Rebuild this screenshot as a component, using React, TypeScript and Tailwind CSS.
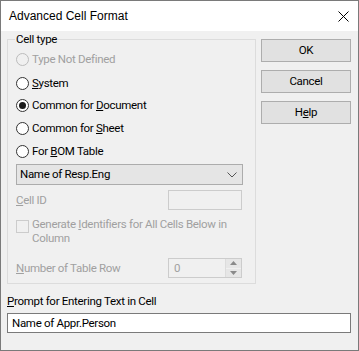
import React from 'react';

const font = { fontFamily: 'Roboto, "Liberation Sans", Arial, sans-serif' };
const titleFont = { fontFamily: '"Liberation Sans", Arial, sans-serif' };

function Radio({ label, checked, disabled }: { label: React.ReactNode; checked?: boolean; disabled?: boolean }) {
  return (
    <div className="flex items-center h-[22px]">
      <span
        className={`w-[13px] h-[13px] rounded-full border flex items-center justify-center ${
          disabled ? 'border-[#bcbcbc] bg-[#f0f0f0]' : 'border-[#333333] bg-white'
        }`}
      >
        {checked && <span className="w-[7px] h-[7px] rounded-full bg-[#1a1a1a]" />}
      </span>
      <span className={`ml-[3px] ${disabled ? 'text-[#a0a0a0]' : 'text-black'}`}>{label}</span>
    </div>
  );
}

function Btn({ children }: { children: React.ReactNode }) {
  return (
    <div className="w-[90px] h-[23px] border border-[#adadad] bg-[#e1e1e1] flex items-center justify-center text-black">
      {children}
    </div>
  );
}

export default function App() {
  return (
    <div
      className="w-[359px] h-[351px] border border-[#7a7a7a] bg-[#f0f0f0] text-[11.5px] tracking-[-0.3px] leading-[15px] flex flex-col"
      style={font}
    >
      {/* Title bar */}
      <div className="h-[30px] bg-white flex items-center justify-between pl-[8px] pr-[9px] shrink-0">
        <span className="text-[12px] tracking-normal text-black" style={titleFont}>
          Advanced Cell Format
        </span>
        <svg width="11" height="11" viewBox="0 0 11 11">
          <path d="M0.5 0.5 L10.5 10.5 M10.5 0.5 L0.5 10.5" stroke="#000" strokeWidth="1" />
        </svg>
      </div>

      <div className="flex pl-[6px] pt-[8px]">
        {/* Left column */}
        <div className="w-[249px] flex flex-col">
          <div className="relative border border-[#dcdcdc] h-[245px] pl-[8px] pt-[8px]">
            <span className="absolute -top-[8px] left-[7px] px-[1px] bg-[#f0f0f0] text-black">Cell type</span>
            <Radio label="Type Not Defined" disabled />
            <div className="mt-[2px]">
              <Radio label={<><u>S</u>ystem</>} />
            </div>
            <Radio label={<>Common for <u>D</u>ocument</>} checked />
            <div className="mt-[1px]">
              <Radio label={<>Common for <u>S</u>heet</>} />
            </div>
            <div className="mt-[1px]">
              <Radio label={<>For <u>B</u>OM Table</>} />
            </div>

            {/* Dropdown */}
            <div className="mt-[2px] w-[227px] h-[21px] border border-[#acacac] bg-[#e5e5e5] flex items-center justify-between pl-[3px] pr-[5px]">
              <span className="text-black">Name of Resp.Eng</span>
              <svg width="10" height="6" viewBox="0 0 10 6">
                <path d="M0.5 0.5 L5 5 L9.5 0.5" fill="none" stroke="#555" strokeWidth="1" />
              </svg>
            </div>

            {/* Cell ID */}
            <div className="mt-[5px] flex items-center justify-between w-[226px] h-[20px]">
              <span className="text-[#a0a0a0]">
                <u>C</u>ell ID
              </span>
              <div className="w-[74px] h-[20px] border border-[#cccccc] bg-[#f0f0f0]" />
            </div>

            {/* Checkbox */}
            <div className="mt-[7px] flex items-start">
              <span className="w-[13px] h-[13px] mt-[3px] border border-[#cccccc] bg-[#f0f0f0] shrink-0" />
              <span className="ml-[3px] w-[215px] text-[#a0a0a0] leading-[14px]">
                Generate <u>I</u>dentifiers for All Cells Below in Column
              </span>
            </div>

            {/* Number of table row */}
            <div className="mt-[13px] flex items-center justify-between w-[226px] h-[20px]">
              <span className="text-[#a0a0a0]">
                <u>N</u>umber of Table Row
              </span>
              <div className="w-[74px] h-[20px] border border-[#cccccc] bg-[#f0f0f0] flex">
                <span className="flex-1 pl-[5px] text-[#a0a0a0] leading-[18px]">0</span>
                <div className="w-[16px] flex flex-col border-l border-[#dcdcdc]">
                  <div className="flex-1 flex items-center justify-center bg-[#e6e6e6] border-b border-[#f0f0f0]">
                    <svg width="7" height="4" viewBox="0 0 7 4">
                      <path d="M0 4 L3.5 0 L7 4 Z" fill="#8a8a8a" />
                    </svg>
                  </div>
                  <div className="flex-1 flex items-center justify-center bg-[#e6e6e6]">
                    <svg width="7" height="4" viewBox="0 0 7 4">
                      <path d="M0 0 L3.5 4 L7 0 Z" fill="#8a8a8a" />
                    </svg>
                  </div>
                </div>
              </div>
            </div>
          </div>
        </div>

        {/* Buttons */}
        <div className="ml-[5px] flex flex-col gap-[8px]">
          <Btn>OK</Btn>
          <Btn>Cancel</Btn>
          <Btn>
            <span>
              H<u>e</u>lp
            </span>
          </Btn>
        </div>
      </div>

      {/* Prompt */}
      <div className="pl-[6px] pr-[7px] mt-[10px]">
        <div className="text-black">
          <u>P</u>rompt for Entering Text in Cell
        </div>
        <div className="mt-[4px] h-[20px] border border-[#7a7a7a] bg-white flex items-center pl-[4px] text-black">
          Name of Appr.Person
        </div>
      </div>
    </div>
  );
}
